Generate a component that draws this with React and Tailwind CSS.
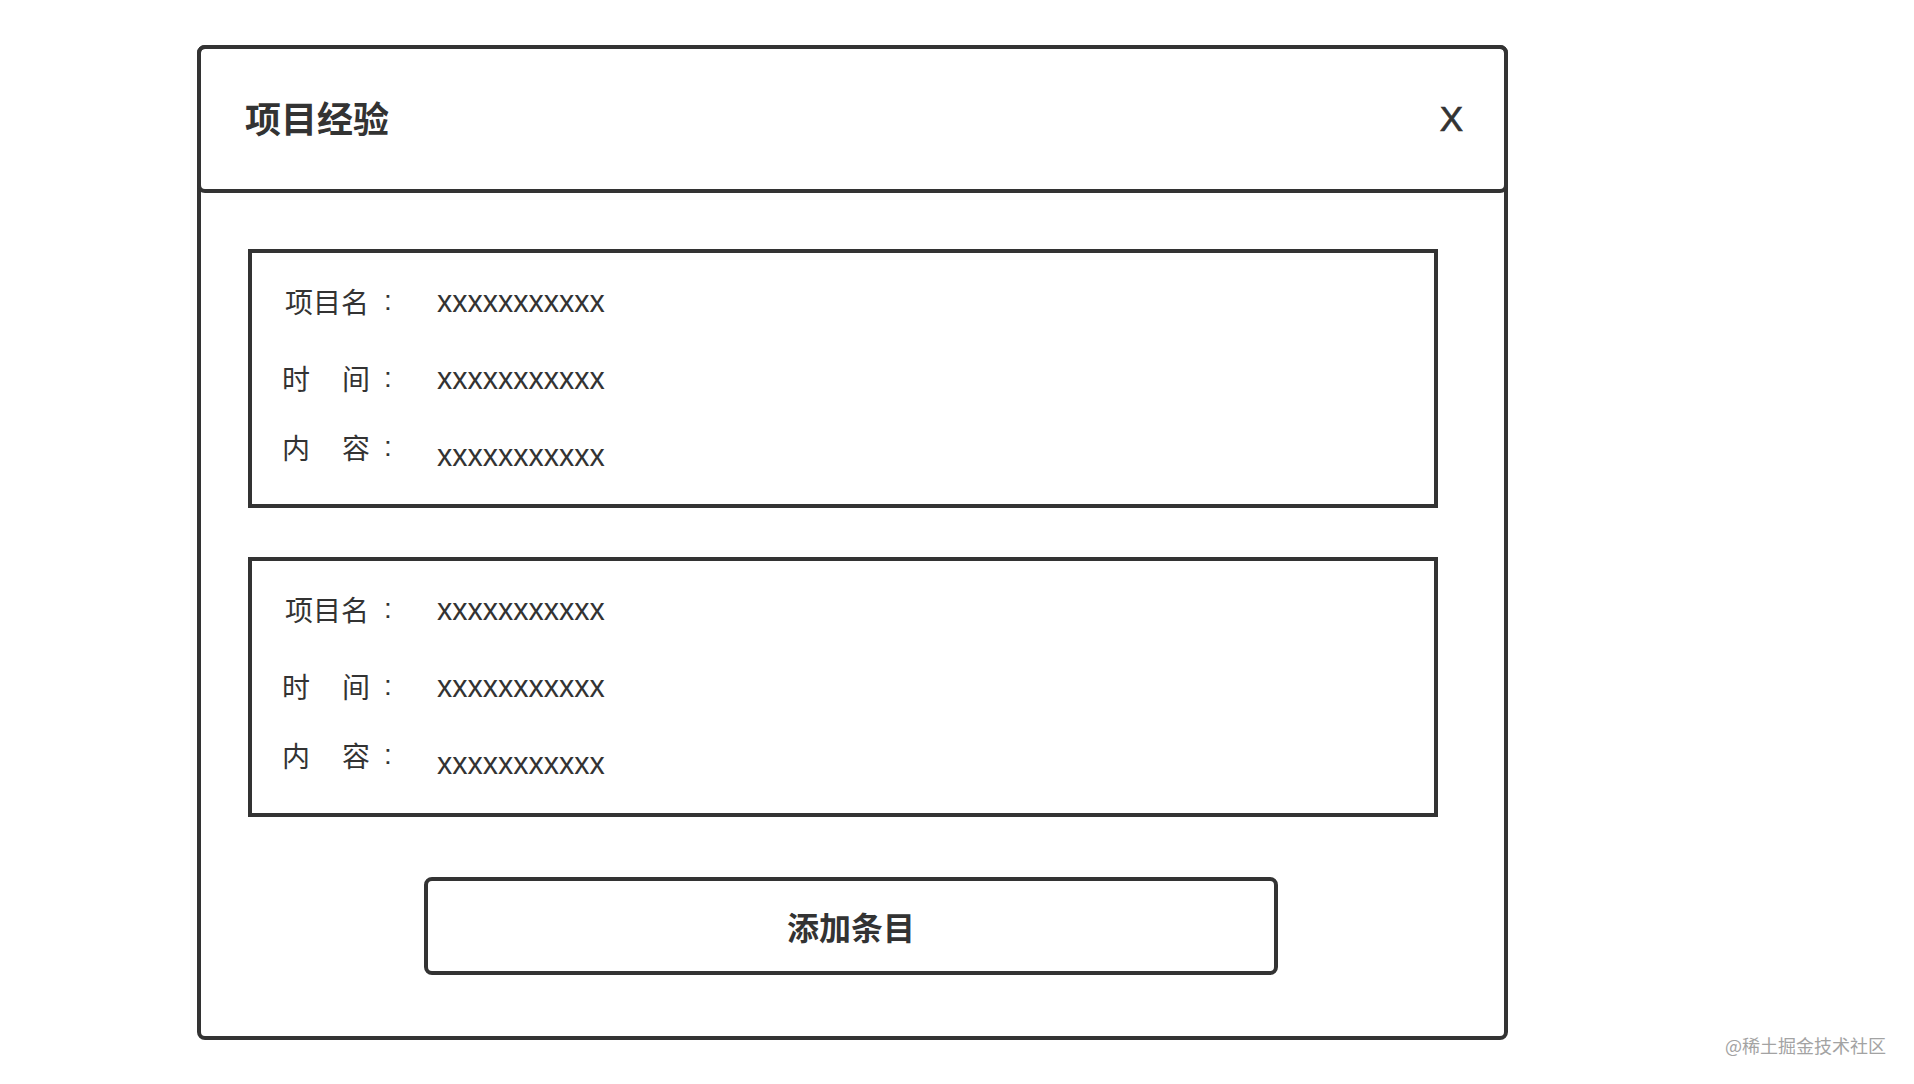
import React from "react";

const rows = [
  { label: ["项目名"], value: "xxxxxxxxxxx", shift: "" },
  { label: ["时", "间"], value: "xxxxxxxxxxx", shift: "" },
  { label: ["内", "容"], value: "xxxxxxxxxxx", shift: "mt-[16px]" },
];

const Entry = ({ height }) => {
  return (
    <div className={`border-[4px] border-[#333] w-[1190px] ${height} pt-[28px] pl-[30px]`}>
      {rows.map((row, index) => (
        <div
          key={index}
          className={`flex items-center h-[40px] ${index === 1 ? "mt-[37px]" : ""} ${index === 2 ? "mt-[29px]" : ""}`}
        >
          <div className="w-[102px] flex text-[28px] leading-[40px] text-[#333] font-['Noto_Sans_CJK_SC',sans-serif]">
            {row.label.length === 1 ? (
              <span className="ml-[3px]">{row.label[0]}</span>
            ) : (
              <>
                <span>{row.label[0]}</span>
                <span className="ml-[32px]">{row.label[1]}</span>
              </>
            )}
          </div>
          <span className="w-[53px] text-[28px] leading-[40px] text-[#333] font-['Liberation_Sans',sans-serif]">
            :
          </span>
          <span className={`text-[30.5px] leading-[40px] text-[#333] font-['Liberation_Sans',sans-serif] ${row.shift}`}>
            {row.value}
          </span>
        </div>
      ))}
    </div>
  );
};

export default function App() {
  return (
    <div className="relative w-[1914px] h-[1084px] bg-white pl-[197px] pt-[45px]">
      <div className="w-[1311px] h-[995px] border-[4px] border-[#333] rounded-[8px] flex flex-col">
        {/* header */}
        <div className="-mx-[4px] -mt-[4px] h-[148px] border-[4px] border-[#333] rounded-[8px] flex items-center justify-between pl-[44px] pr-[41px]">
          <span className="mb-[5px] text-[36px] font-bold text-[#333] font-['Noto_Sans_CJK_SC',sans-serif]">
            项目经验
          </span>
          <span className="text-[35px] text-[#333] font-['Liberation_Sans',sans-serif] [-webkit-text-stroke:0.7px_#333]">
            X
          </span>
        </div>

        <div className="flex flex-col pl-[47px]">
          <div className="mt-[56px]">
            <Entry height="h-[259px]" />
          </div>
          <div className="mt-[49px]">
            <Entry height="h-[260px]" />
          </div>
          <button
            type="button"
            className="mt-[60px] ml-[176px] w-[854px] h-[98px] border-[4px] border-[#333] rounded-[8px] flex items-center justify-center text-[32px] font-bold text-[#333] font-['Noto_Sans_CJK_SC',sans-serif]"
          >
            添加条目
          </button>
        </div>
      </div>

      <div className="absolute left-[1725px] top-[1032px] text-[18px] leading-[26px] text-[#a3a3a3] font-['Noto_Sans_CJK_SC',sans-serif]">
        @稀土掘金技术社区
      </div>
    </div>
  );
}
